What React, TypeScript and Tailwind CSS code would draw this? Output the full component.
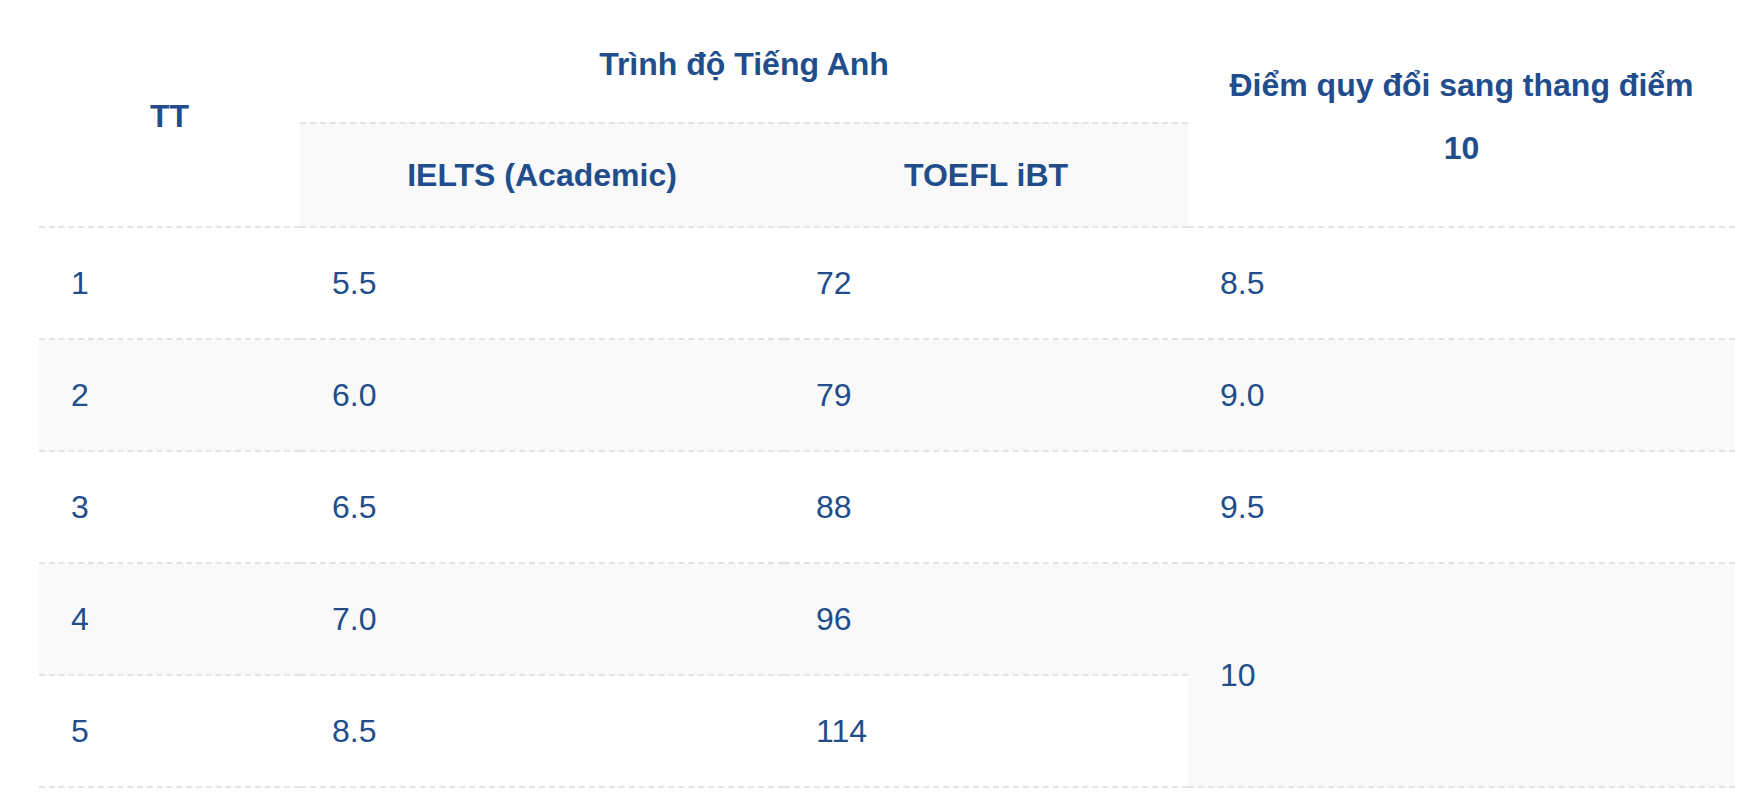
const rows = [
  { tt: '1', ielts: '5.5', toefl: '72', score: '8.5' },
  { tt: '2', ielts: '6.0', toefl: '79', score: '9.0' },
  { tt: '3', ielts: '6.5', toefl: '88', score: '9.5' },
  { tt: '4', ielts: '7.0', toefl: '96', score: '10' },
  { tt: '5', ielts: '8.5', toefl: '114', score: null },
];

const cell = 'border-b-2 border-dashed border-[#e4e4e4] px-8 align-middle text-left font-normal';

export default function App() {
  return (
    <div className="min-h-screen bg-white pl-[39px] font-['Liberation_Sans',Arial,sans-serif] text-[32px] text-[#214d8c]">
      <table className="w-[1696px] table-fixed border-separate border-spacing-0">
        <colgroup>
          <col className="w-[261px]" />
          <col className="w-[484px]" />
          <col className="w-[404px]" />
          <col className="w-[547px]" />
        </colgroup>
        <thead>
          <tr className="h-[122px]">
            <th rowSpan={2} className="border-b-2 border-dashed border-[#e4e4e4] px-8 pt-[7px] text-center align-middle font-bold leading-[63px]">
              TT
            </th>
            <th colSpan={2} className="px-8 pt-[7px] text-center align-middle font-bold leading-[63px]">
              Trình độ Tiếng Anh
            </th>
            <th rowSpan={2} className="border-b-2 border-dashed border-[#e4e4e4] px-8 pt-[7px] text-center align-middle font-bold leading-[63px]">
              Điểm quy đổi sang thang điểm 10
            </th>
          </tr>
          <tr className="h-[106px]">
            <th className="border-y-2 border-dashed border-[#e4e4e4] bg-[#f9f9f9] px-8 text-center align-middle font-bold leading-[63px]">
              IELTS (Academic)
            </th>
            <th className="border-y-2 border-dashed border-[#e4e4e4] bg-[#f9f9f9] px-8 text-center align-middle font-bold leading-[63px]">
              TOEFL iBT
            </th>
          </tr>
        </thead>
        <tbody>
          {rows.map((r, i) => {
            const bg = i % 2 === 1 ? 'bg-[#f9f9f9]' : 'bg-white';
            return (
              <tr key={r.tt} className="h-[112px] leading-[64px]">
                <td className={`${cell} ${bg}`}>{r.tt}</td>
                <td className={`${cell} ${bg}`}>{r.ielts}</td>
                <td className={`${cell} ${bg}`}>{r.toefl}</td>
                {r.score !== null && (
                  <td rowSpan={r.score === '10' ? 2 : 1} className={`${cell} ${bg}`}>
                    {r.score}
                  </td>
                )}
              </tr>
            );
          })}
        </tbody>
      </table>
    </div>
  );
}
